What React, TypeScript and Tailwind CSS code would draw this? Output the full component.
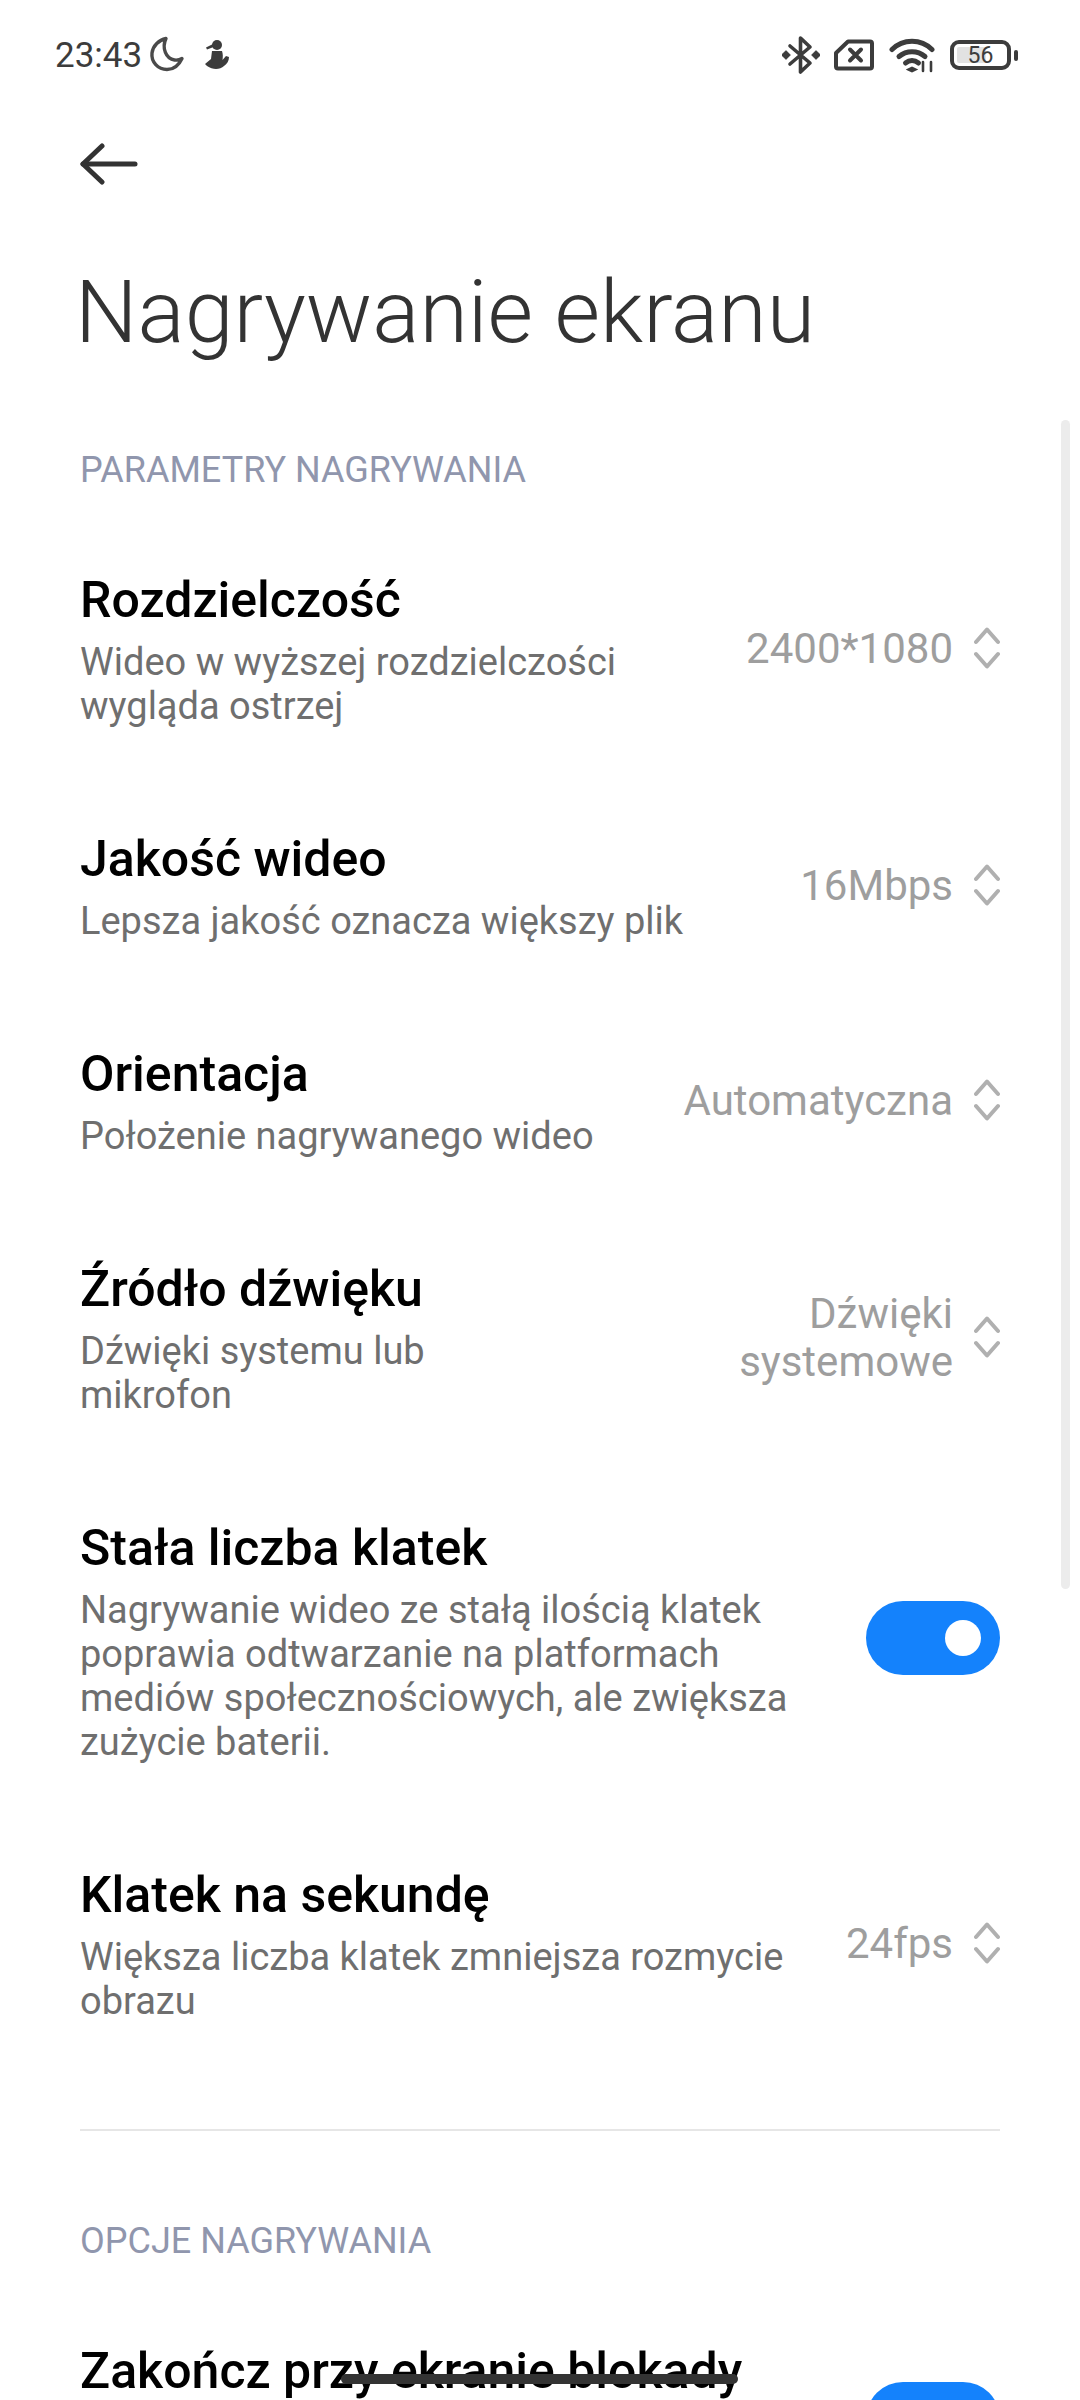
import type { ReactNode } from 'react';

const Chevrons = () => (
  <svg width="26" height="42" viewBox="0 0 26 42" fill="none" stroke="#b0b0b0" strokeWidth="4" strokeLinecap="round" strokeLinejoin="round" className="shrink-0 mb-[3px]">
    <path d="M2 15 13 2.500 24 15" />
    <path d="M2 27 13 39.500 24 27" />
  </svg>
);

const Toggle = () => (
  <div className="w-[134px] h-[74px] shrink-0 rounded-full bg-[#1482fc] flex items-center justify-end pr-[19px]">
    <div className="w-[36px] h-[36px] rounded-full bg-white" />
  </div>
);

const BackArrow = () => (
  <svg width="58" height="42" viewBox="0 0 58 42" fill="none" stroke="#333" strokeWidth="5" strokeLinecap="round" strokeLinejoin="round">
    <path d="M3 21h52" />
    <path d="M22 3 3 21 22 39" />
  </svg>
);

const StatusLeft = () => (
  <div className="flex items-center">
    <span className="text-[35px] leading-none text-[#3c3c3c]">23:43</span>
    <svg width="36" height="36" viewBox="0 0 36 36" fill="none" stroke="#4a4a4a" strokeWidth="3.4" strokeLinejoin="round" className="ml-[7px] mb-[2px]">
      <path d="M17 2.500C10 4 4 9.500 3 17c-1 9 6 16.500 15 16.500 7 0 12-4.500 15-11-2 1.200-5 1.800-7.500 1.500C17 23 12.500 12 17 2.500z" />
    </svg>
    <svg width="28" height="32" viewBox="0 0 28 32" fill="#3c3c3c" className="ml-[17px]">
      <circle cx="15" cy="6" r="5" />
      <path d="M12 4.500 4 8.500l1 2 8-3z" />
      <path d="M10 12h10c1 3 1 6 .5 9l3.500-4 3 1c0 4-2 7-5 9-2 2-5 3-8 3-3 0-6-1-9-3l-2-2 6-5 1-8z" />
    </svg>
  </div>
);

const StatusRight = () => (
  <div className="flex items-center">
    <svg width="38" height="40" viewBox="0 0 38 40" fill="none" stroke="#3c3c3c" strokeWidth="3.600" strokeLinecap="round" strokeLinejoin="round">
      <path d="M8 11 28 28 18.500 37V3L28 12 8 29" />
      <rect x="1" y="17" width="6" height="6" fill="#3c3c3c" strokeWidth="1" transform="rotate(45 4 20)" />
      <rect x="31" y="17" width="6" height="6" fill="#3c3c3c" strokeWidth="1" transform="rotate(45 34 20)" />
    </svg>
    <svg width="40" height="32" viewBox="0 0 40 32" fill="none" stroke="#3c3c3c" strokeWidth="4" strokeLinejoin="round" strokeLinecap="round" className="ml-[14px]">
      <path d="M14 2.500h22a2 2 0 0 1 2 2v23a2 2 0 0 1-2 2H4a2 2 0 0 1-2-2V14z" />
      <path d="M16 10.500l11 11M27 10.500l-11 11" />
    </svg>
    <svg width="46" height="35" viewBox="0 0 46 35" fill="none" stroke="#3c3c3c" strokeWidth="5" strokeLinecap="round" className="ml-[15px]">
      <path d="M3 11.500C14 0.500 32 0.500 43 11.500" />
      <path d="M10 18.500c7.500-6.500 18.500-6.500 26 0" />
      <path d="M16.500 25c4-3.200 9-3.200 13 0" />
      <path d="M19 31.500l4 2 4-2-4-2z" fill="#3c3c3c" strokeWidth="2" />
      <path d="M34 24v9M42 24v9" strokeWidth="2.600" />
    </svg>
    <div className="ml-[15px] flex items-center">
      <div className="relative w-[61px] h-[30px] rounded-[9px] border-[4px] border-[#3c3c3c] flex items-center justify-center">
        <div className="absolute left-[3px] top-[3px] bottom-[3px] w-[29px] rounded-[2px] bg-[#e2e2e2]" />
        <span className="relative text-[23px] leading-none text-[#3c3c3c]">56</span>
      </div>
      <div className="ml-[3px] w-[4px] h-[11px] rounded-full bg-[#3c3c3c]" />
    </div>
  </div>
);

const SectionLabel = ({ children }: { children: ReactNode }) => (
  <div className="text-[36px] leading-[44px] text-[#9096ad]">{children}</div>
);

const Row = ({ title, desc, descWidth, right }: { title: string; desc: string; descWidth: string; right: ReactNode }) => (
  <div className="flex items-center justify-between">
    <div>
      <div className="text-[50px] leading-[60px] font-medium text-black">{title}</div>
      <div className={`mt-[10px] text-[38px] leading-[44px] text-[#6f6f6f] ${descWidth}`}>{desc}</div>
    </div>
    {right}
  </div>
);

const Value = ({ children }: { children: ReactNode }) => (
  <div className="flex items-center gap-[21px] shrink-0">
    <div className="text-[42px] leading-[48px] text-[#9e9e9e] text-right">{children}</div>
    <Chevrons />
  </div>
);

export default function App() {
  return (
    <div className="relative h-[2400px] w-[1080px] overflow-hidden bg-white font-['Roboto',sans-serif]">
      {/* Status bar */}
      <div className="h-[110px] pl-[55px] pr-[62px] flex items-center justify-between">
        <StatusLeft />
        <StatusRight />
      </div>

      <div className="px-[80px]">
        <div className="mt-[33px]">
          <BackArrow />
        </div>
        <h1 className="mt-[77px] -ml-[5px] text-[88px] leading-[100px] font-light text-[#333]">Nagrywanie ekranu</h1>

        <div className="mt-[86px]">
          <SectionLabel>PARAMETRY NAGRYWANIA</SectionLabel>
        </div>

        <div className="mt-[78px] flex flex-col gap-[101px]">
          <Row title="Rozdzielczość" desc="Wideo w wyższej rozdzielczości wygląda ostrzej" descWidth="w-[560px]" right={<Value>2400*1080</Value>} />
          <Row title="Jakość wideo" desc="Lepsza jakość oznacza większy plik" descWidth="w-[640px]" right={<Value>16Mbps</Value>} />
          <Row title="Orientacja" desc="Położenie nagrywanego wideo" descWidth="w-[560px]" right={<Value>Automatyczna</Value>} />
          <Row title="Źródło dźwięku" desc="Dźwięki systemu lub mikrofon" descWidth="w-[400px]" right={<Value>Dźwięki<br />systemowe</Value>} />
          <Row
            title="Stała liczba klatek"
            desc="Nagrywanie wideo ze stałą ilością klatek poprawia odtwarzanie na platformach mediów społecznościowych, ale zwiększa zużycie baterii."
            descWidth="w-[730px]"
            right={<div className="mb-[6px]"><Toggle /></div>}
          />
          <Row title="Klatek na sekundę" desc="Większa liczba klatek zmniejsza rozmycie obrazu" descWidth="w-[720px]" right={<Value>24fps</Value>} />
        </div>

        <div className="mt-[106px] h-[2px] bg-[#e6e6e6]" />

        <div className="mt-[88px]">
          <SectionLabel>OPCJE NAGRYWANIA</SectionLabel>
        </div>

        <div className="mt-[78px] flex items-start justify-between">
          <div className="relative text-[50px] leading-[60px] font-medium text-black">
            Zakończ przy ekranie blokady
            <div className="absolute left-[261px] top-[33px] w-[397px] h-[10px] rounded-full bg-[#333]" />
          </div>
          <div className="mt-[41px]">
            <Toggle />
          </div>
        </div>
      </div>

      {/* Scroll indicator */}
      <div className="absolute left-[1061px] top-[420px] w-[9px] h-[1169px] rounded-full bg-[#ececec]" />
    </div>
  );
}
